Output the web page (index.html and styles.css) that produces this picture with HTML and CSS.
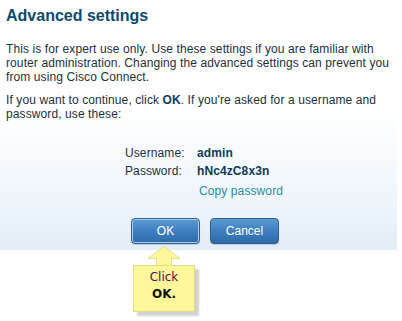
FILE: index.html
```html
<!DOCTYPE html>
<html>
<head>
<meta charset="utf-8">
<link rel="stylesheet" href="styles.css">
</head>
<body>
<div class="panel">
  <h1 class="title">Advanced settings</h1>
  <p class="para">This is for expert use only. Use these settings if you are familiar with router administration. Changing the advanced settings can prevent you from using Cisco Connect.</p>
  <p class="para">If you want to continue, click <b>OK</b>. If you're asked for a username and password, use these:</p>
  <div class="creds">
    <div class="label">Username:</div><div class="value">admin</div>
    <div class="label">Password:</div><div class="value">hNc4zC8x3n</div>
    <div></div><div class="copy">Copy password</div>
  </div>
  <div class="buttons">
    <button class="btn btn-ok">OK</button>
    <button class="btn">Cancel</button>
  </div>
</div>
<div class="callout-area">
  <div class="callout">
    <svg class="arrow" width="40" height="20" viewBox="0 0 40 20">
      <path d="M20 0.5 L36 12.5 L27.5 12.5 L27.5 19.5 L12.5 19.5 L12.5 12.5 L4 12.5 Z" fill="#fdf79a" stroke="#e2dc8a" stroke-width="1"/>
    </svg>
    <div class="callout-box">Click<br><b>OK.</b></div>
  </div>
</div>
</body>
</html>
```
FILE: styles.css
```css
html, body {
  margin: 0;
  padding: 0;
  background: #ffffff;
}
body {
  width: 402px;
  height: 321px;
  overflow: hidden;
  font-family: "Liberation Sans", Arial, sans-serif;
}
.panel {
  width: 397px;
  height: 250px;
  box-sizing: border-box;
  padding: 6px 6px 0 6px;
  background: linear-gradient(to bottom, #ffffff 0%, #ffffff 45%, #eef5fb 80%, #e3edf7 100%);
}
.title {
  margin: 0;
  font-size: 16px;
  font-weight: bold;
  color: #0d4a6e;
  line-height: 20px;
}
.para {
  margin: 0;
  font-size: 12px;
  line-height: 14px;
  letter-spacing: 0.1px;
  color: #1c2f3b;
}
.title + .para {
  margin-top: 16px;
}
.para + .para {
  margin-top: 9px;
}
.para b {
  color: #0d3b58;
}
.creds {
  display: grid;
  grid-template-columns: 72px auto;
  row-gap: 4px;
  margin-top: 25px;
  margin-left: 119px;
  font-size: 12px;
  line-height: 14px;
  letter-spacing: 0.1px;
  color: #1c2f3b;
}
.value {
  font-weight: bold;
  color: #0f3b57;
}
.copy {
  color: #1d8e9e;
  margin-left: 2px;
  margin-top: 2px;
}
.buttons {
  display: flex;
  gap: 10px;
  margin-top: 20px;
  margin-left: 125px;
}
.btn {
  width: 69px;
  height: 26px;
  border: 1px solid #2d5f8f;
  border-radius: 4px;
  background: linear-gradient(to bottom, #5b9ad3 0%, #3f7fbf 50%, #2f6aa8 100%);
  color: #ffffff;
  font-family: "Liberation Sans", Arial, sans-serif;
  font-size: 12px;
  padding: 0;
  box-shadow: 0 1px 1px rgba(0,0,0,0.15);
}
.btn-ok {
  box-shadow: inset 0 0 0 1px #a9cdf0, 0 1px 1px rgba(0,0,0,0.15);
}
.callout-area {
  padding-left: 133px;
  margin-top: -4px;
}
.callout {
  position: relative;
  width: 62px;
}
.arrow {
  display: block;
  margin-left: 11px;
  margin-bottom: -1px;
  position: relative;
  z-index: 1;
}
.callout-box {
  width: 62px;
  height: 47px;
  box-sizing: border-box;
  background: #fdf79a;
  border: 1px solid #e2dc8a;
  box-shadow: 4px 4px 2px rgba(0,0,0,0.18);
  font-family: "DejaVu Sans", sans-serif;
  font-size: 12px;
  line-height: 17px;
  color: #5a0a4a;
  text-align: center;
  padding-top: 3px;
}
.callout-box b {
  color: #111111;
}
```
